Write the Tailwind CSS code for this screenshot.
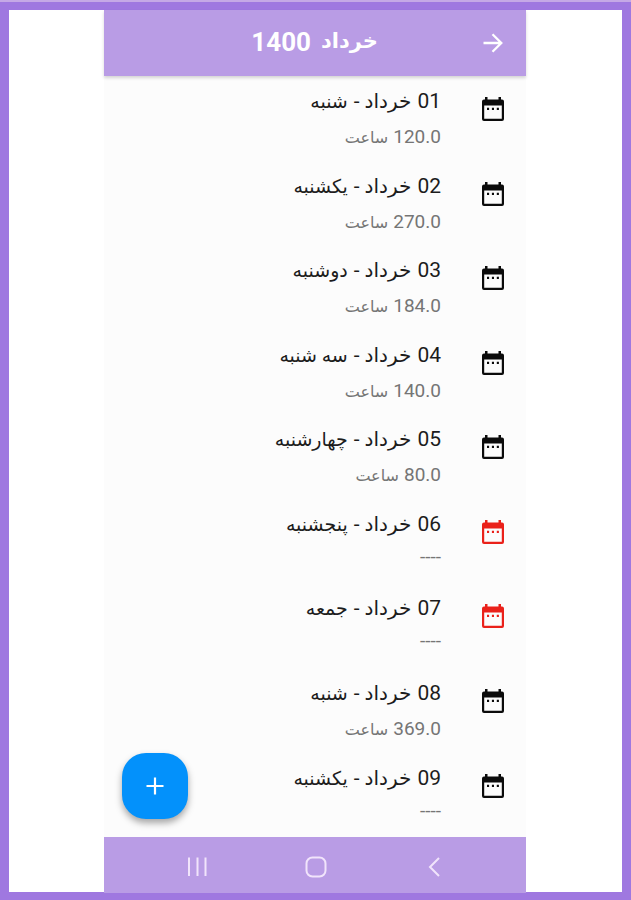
<!DOCTYPE html>
<html lang="fa">
<head>
    <meta charset="UTF-8">
    <meta name="viewport" content="width=device-width, initial-scale=1.0">
    <title>خرداد 1400</title>
    <script src="https://cdn.jsdelivr.net/npm/@tailwindcss/browser@4"></script>
</head>
<body class="bg-[#9f78e0] font-['Roboto','DejaVu_Sans',sans-serif]">

    <div class="h-[900px] w-[631px] overflow-hidden border-t-2 border-[#c5a9e6] px-[9px] pt-2">
        <div class="flex h-[882px] justify-center bg-white">

            <!-- Phone screen -->
            <div dir="rtl" class="relative -ml-px flex h-[883px] w-[422px] flex-col bg-[#fcfcfc]">

                <!-- App bar -->
                <header class="z-10 flex h-[66px] shrink-0 items-center bg-[#b99ce5] pr-[21px] text-white shadow-[0_2px_3px_rgba(0,0,0,0.16)]">
                    <svg class="size-6" viewBox="0 0 24 24" fill="none" stroke="currentColor" stroke-width="2.3">
                        <path d="M2.5 12H20M11.5 3.2L20.3 12L11.5 20.8"/>
                    </svg>
                    <h1 class="mr-[103px] flex items-center gap-[21px] pb-[3px] text-[26px] font-bold leading-none">
                        <span class="w-[46px] whitespace-nowrap text-[21px]">خرداد</span>
                        <span>1400</span>
                    </h1>
                </header>

                <!-- Day list -->
                <ul id="dayList" class="flex flex-1 flex-col"></ul>

                <!-- Add button -->
                <button class="absolute bottom-[74px] left-[18px] flex size-[66px] items-center justify-center rounded-[24px] bg-[#0391fb] text-white shadow-[0_4px_7px_rgba(0,0,0,0.35)]">
                    <svg class="size-[18px]" viewBox="0 0 18 18" fill="none" stroke="currentColor" stroke-width="2.2">
                        <path d="M9 0.5V17.5M0.5 9H17.5"/>
                    </svg>
                </button>

                <!-- System navigation -->
                <nav dir="ltr" class="flex h-14 shrink-0 items-center justify-between bg-[#b99ce5] pb-px pl-[83px] pr-[84px] pt-1 text-[#f1e4fb]">
                    <svg class="h-5 w-5" viewBox="0 0 20 20" fill="none" stroke="currentColor" stroke-width="2">
                        <path d="M2 0.5V19M10.5 0.5V19M18.5 0.5V19"/>
                    </svg>
                    <svg class="-ml-px h-[22px] w-[22px]" viewBox="0 0 22 22" fill="none" stroke="currentColor" stroke-width="2">
                        <rect x="1.5" y="1.5" width="19" height="19" rx="6"/>
                    </svg>
                    <svg class="h-5 w-4" viewBox="0 0 16 20" fill="none" stroke="currentColor" stroke-width="2">
                        <path d="M13 1L4 10L13 19"/>
                    </svg>
                </nav>
            </div>
        </div>
    </div>

    <script>
        const DAYS = [
            { day: "01", name: "شنبه", hours: "120.0" },
            { day: "02", name: "یکشنبه", hours: "270.0" },
            { day: "03", name: "دوشنبه", hours: "184.0" },
            { day: "04", name: "سه شنبه", hours: "140.0" },
            { day: "05", name: "چهارشنبه", hours: "80.0" },
            { day: "06", name: "پنجشنبه", off: true },
            { day: "07", name: "جمعه", off: true },
            { day: "08", name: "شنبه", hours: "369.0" },
            { day: "09", name: "یکشنبه" }
        ];

        document.getElementById("dayList").innerHTML = DAYS.map(d => `
            <li class="flex flex-1 items-start pr-[21px]">
                <svg class="mt-5 h-[26px] w-6 ${d.off ? "text-[#ea211a]" : "text-[#0b0b0b]"}" viewBox="0 0 24 26" fill="currentColor">
                    <path fill-rule="evenodd" d="M4 1H6.5V3.5H17.5V1H20V3.5H21Q23 3.5 23 5.5V23Q23 25 21 25H3Q1 25 1 23V5.5Q1 3.5 3 3.5H4ZM3.2 9.5V22.8H20.8V9.5Z"/>
                    <path d="M6 11.8H8.1V13.9H6ZM10.9 11.8H13V13.9H10.9ZM15.8 11.8H17.9V13.9H15.8Z"/>
                </svg>
                <div class="mr-10 whitespace-nowrap">
                    <div class="mt-[13px] flex h-6 items-baseline gap-[6px] text-[21px] leading-6 text-[#1c1c1c]">
                        <span>${d.day}</span>
                        <span class="text-[20px]">خرداد</span>
                        <span class="-mr-px">-</span>
                        <span class="text-[19px]">${d.name}</span>
                    </div>
                    ${d.hours
                        ? `<div class="mt-3 flex h-6 items-baseline gap-[5px] text-[19px] leading-6 text-[#757575]">
                            <span>${d.hours}</span>
                            <span class="text-[16px]">ساعت</span>
                        </div>`
                        : `<div class="mt-[9px] h-6 text-[19px] leading-6 text-[#757575]">----</div>`}
                </div>
            </li>`).join("");
    </script>
</body>
</html>
